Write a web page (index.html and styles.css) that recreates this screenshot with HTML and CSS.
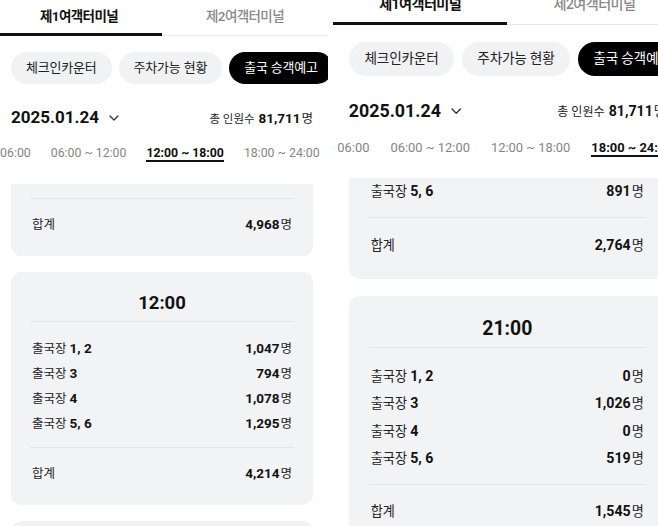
FILE: index.html
```html
<!DOCTYPE html>
<html lang="ko">
<head>
<meta charset="utf-8">
<title>출국 승객예고</title>
<link rel="stylesheet" href="styles.css">
</head>
<body>
<div class="screens">
  <section class="shot shot--left">
    <div class="phone">
      <header class="top">
        <nav class="terminal-tabs">
          <div class="terminal-tab is-active">제1여객터미널</div>
          <div class="terminal-tab">제2여객터미널</div>
        </nav>
        <div class="chips">
          <span class="chip">체크인카운터</span>
          <span class="chip">주차가능 현황</span>
          <span class="chip is-active">출국 승객예고</span>
        </div>
        <div class="date-row">
          <div class="date">2025.01.24<svg class="chev" width="10" height="6" viewBox="0 0 10 6"><path d="M1 1 L5 5 L9 1" fill="none" stroke="#333" stroke-width="1.3" stroke-linecap="round" stroke-linejoin="round"/></svg></div>
          <div class="total">총 인원수 <b>81,711</b><span class="unit">명</span></div>
        </div>
        <div class="slots">
          <div class="slots__track">
            <span class="slot">00:00 ~ 06:00</span>
            <span class="slot">06:00 ~ 12:00</span>
            <span class="slot is-active">12:00 ~ 18:00</span>
            <span class="slot">18:00 ~ 24:00</span>
          </div>
        </div>
      </header>
      <main class="list">
        <article class="card card--cut">
          <div class="card__divider"></div>
          <div class="total-row"><span class="label">합계</span><span class="val"><b>4,968</b><span class="unit">명</span></span></div>
        </article>
        <article class="card">
          <h2 class="card__title">12:00</h2>
          <div class="card__divider"></div>
          <div class="rows">
            <div class="row"><span class="label">출국장 <b>1, 2</b></span><span class="val"><b>1,047</b><span class="unit">명</span></span></div>
            <div class="row"><span class="label">출국장 <b>3</b></span><span class="val"><b>794</b><span class="unit">명</span></span></div>
            <div class="row"><span class="label">출국장 <b>4</b></span><span class="val"><b>1,078</b><span class="unit">명</span></span></div>
            <div class="row"><span class="label">출국장 <b>5, 6</b></span><span class="val"><b>1,295</b><span class="unit">명</span></span></div>
          </div>
          <div class="card__divider"></div>
          <div class="total-row"><span class="label">합계</span><span class="val"><b>4,214</b><span class="unit">명</span></span></div>
        </article>
        <article class="card card--next"></article>
      </main>
    </div>
  </section>

  <section class="shot shot--right">
    <div class="phone">
      <header class="top">
        <nav class="terminal-tabs">
          <div class="terminal-tab is-active">제1여객터미널</div>
          <div class="terminal-tab">제2여객터미널</div>
        </nav>
        <div class="chips">
          <span class="chip">체크인카운터</span>
          <span class="chip">주차가능 현황</span>
          <span class="chip is-active">출국 승객예고</span>
        </div>
        <div class="date-row">
          <div class="date">2025.01.24<svg class="chev" width="10" height="6" viewBox="0 0 10 6"><path d="M1 1 L5 5 L9 1" fill="none" stroke="#333" stroke-width="1.3" stroke-linecap="round" stroke-linejoin="round"/></svg></div>
          <div class="total">총 인원수 <b>81,711</b><span class="unit">명</span></div>
        </div>
        <div class="slots">
          <div class="slots__track">
            <span class="slot">00:00 ~ 06:00</span>
            <span class="slot">06:00 ~ 12:00</span>
            <span class="slot">12:00 ~ 18:00</span>
            <span class="slot is-active">18:00 ~ 24:00</span>
          </div>
        </div>
      </header>
      <main class="list">
        <article class="card card--cut card--cut-rows">
          <div class="rows">
            <div class="row"><span class="label">출국장 <b>5, 6</b></span><span class="val"><b>891</b><span class="unit">명</span></span></div>
          </div>
          <div class="card__divider"></div>
          <div class="total-row"><span class="label">합계</span><span class="val"><b>2,764</b><span class="unit">명</span></span></div>
        </article>
        <article class="card">
          <h2 class="card__title">21:00</h2>
          <div class="card__divider"></div>
          <div class="rows">
            <div class="row"><span class="label">출국장 <b>1, 2</b></span><span class="val"><b>0</b><span class="unit">명</span></span></div>
            <div class="row"><span class="label">출국장 <b>3</b></span><span class="val"><b>1,026</b><span class="unit">명</span></span></div>
            <div class="row"><span class="label">출국장 <b>4</b></span><span class="val"><b>0</b><span class="unit">명</span></span></div>
            <div class="row"><span class="label">출국장 <b>5, 6</b></span><span class="val"><b>519</b><span class="unit">명</span></span></div>
          </div>
          <div class="card__divider"></div>
          <div class="total-row"><span class="label">합계</span><span class="val"><b>1,545</b><span class="unit">명</span></span></div>
        </article>
      </main>
    </div>
  </section>
</div>
</body>
</html>
```

FILE: styles.css
```css
* { box-sizing: border-box; }

body {
  margin: 0;
  background: #fff;
  font-family: Roboto, "Noto Sans CJK KR", sans-serif;
  color: #111;
}

.screens {
  display: flex;
  width: 658px;
  height: 526px;
  overflow: hidden;
}

.shot {
  flex-shrink: 0;
  height: 526px;
  overflow: hidden;
  background: #fff;
}

.shot--left { width: 329px; }
.shot--right { width: 325px; margin-left: 4px; }

.phone { width: 332px; }
.shot--left .phone { margin-left: -4px; }
.shot--right .phone { zoom: 1.05; margin-top: -12px; }

/* terminal tabs */
.terminal-tabs {
  display: flex;
  box-shadow: inset 0 -1px 0 #e7e8ea;
}

.terminal-tab {
  flex: 1;
  height: 36px;
  padding-top: 6px;
  line-height: 20px;
  text-align: center;
  font-size: 13.5px;
  font-weight: 500;
  letter-spacing: -0.6px;
  color: #888;
}

.terminal-tab.is-active {
  color: #111;
  font-weight: 700;
  border-bottom: 3px solid #111;
}

/* chips */
.chips {
  display: flex;
  gap: 7px;
  padding: 16px 0 0 15px;
  overflow: hidden;
}

.chip {
  flex-shrink: 0;
  height: 32px;
  line-height: 32px;
  padding: 0 15px;
  border-radius: 16px;
  background: #f1f2f4;
  font-size: 13px;
  letter-spacing: -0.2px;
  color: #222;
  white-space: nowrap;
}

.chip.is-active {
  background: #000;
  color: #fff;
}

/* date row */
.date-row {
  display: flex;
  justify-content: space-between;
  align-items: center;
  height: 30px;
  margin-top: 18px;
  padding: 0 15px;
}

.date {
  display: flex;
  align-items: center;
  font-size: 17px;
  font-weight: 700;
  color: #111;
}

.chev { margin-left: 10px; margin-top: 2px; }

.total {
  font-size: 11.5px;
  color: #222;
}

.total b {
  font-size: 13.5px;
  font-weight: 700;
  color: #111;
  margin-left: 1px;
}

.total .unit { font-size: 12.5px; margin-left: 1px; }

/* time slots */
.slots {
  margin-top: 14px;
  padding-bottom: 22px;
  overflow: hidden;
}

.slots__track {
  display: flex;
  gap: 20px;
  margin-left: -41px;
}

.slot {
  flex-shrink: 0;
  font-size: 12.3px;
  line-height: 14px;
  color: #858585;
  border-bottom: 2px solid transparent;
  white-space: nowrap;
}

.slot.is-active {
  color: #111;
  font-weight: 700;
  border-bottom-color: #111;
}

/* list */
.list {
  display: flex;
  flex-direction: column;
  gap: 16px;
  padding: 0 15px;
}

.card {
  background: #f2f3f5;
  border-radius: 10px;
  padding: 0 19px 19px;
}

.card--next { height: 60px; }

.card--cut {
  border-top-left-radius: 0;
  border-top-right-radius: 0;
  padding-top: 14px;
}

.card--cut-rows { padding-top: 0; margin-top: -2px; }
.card--cut-rows .rows { padding-top: 0; }

.card__title {
  margin: 0;
  padding: 18px 0 5px;
  line-height: 26px;
  font-size: 18.5px;
  font-weight: 700;
  text-align: center;
  color: #111;
}

.card__divider {
  height: 1px;
  background: #e3e4e7;
}

.rows { padding: 14px 2px 11px; }

.row,
.total-row {
  display: flex;
  justify-content: space-between;
  align-items: baseline;
  line-height: 25px;
  font-size: 12.5px;
  color: #222;
}

.total-row { padding: 13px 2px 0; }

.label b {
  font-weight: 700;
  font-size: 13.5px;
  color: #111;
}

.val b {
  font-weight: 700;
  font-size: 13.5px;
  color: #111;
}

.val .unit { margin-left: 1px; }
```
